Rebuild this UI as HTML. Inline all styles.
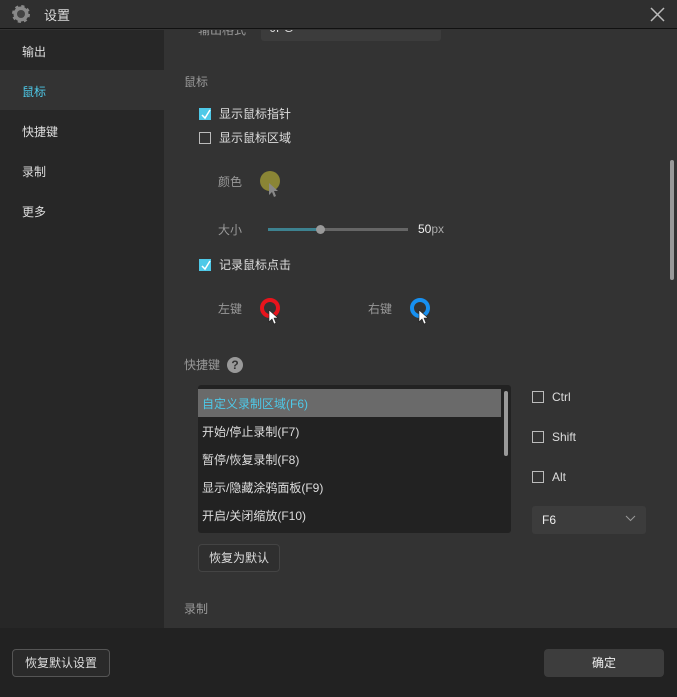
<!DOCTYPE html>
<html><head><meta charset="utf-8"><style>
*{margin:0;padding:0;box-sizing:border-box}
body{width:677px;height:697px;background:#333;font-family:"Liberation Sans","Noto Sans CJK SC",sans-serif;font-size:12px;color:#ddd;position:relative;overflow:hidden}
.a{position:absolute}
.cb{position:absolute;width:12px;height:12px;border:1px solid #bbb}
.cbon{position:absolute;width:12px;height:12px;background:#4ec9e8}
.lbl{color:#999}
</style></head><body>
<div class="a" style="left:0;top:0;width:677px;height:29px;background:#2f2f2f;border-bottom:1px solid #111"></div>
<svg class="a" style="left:11px;top:4px" width="20" height="20" viewBox="0 0 20 20"><circle cx="10" cy="10" r="7.5" fill="#888" stroke="#888" stroke-width="3" stroke-dasharray="3 2.9"/><circle cx="10" cy="10" r="4" fill="#444"/></svg>
<div class="a" style="left:44px;top:5px;font-size:13px;color:#ddd">设置</div>
<svg class="a" style="left:650px;top:7px" width="15" height="15"><path d="M1 1L14 14M14 1L1 14" stroke="#bbb" stroke-width="1.5"/></svg>
<div class="a" style="left:0;top:30px;width:164px;height:598px;background:#272727"></div>
<div class="a" style="left:0;top:70px;width:164px;height:40px;background:#333"></div>
<div class="a" style="left:22px;top:43px">输出</div>
<div class="a" style="left:22px;top:83px;color:#4ec9e8">鼠标</div>
<div class="a" style="left:22px;top:123px">快捷键</div>
<div class="a" style="left:22px;top:163px">录制</div>
<div class="a" style="left:22px;top:203px">更多</div>
<div class="a" style="left:164px;top:30px;width:500px;height:12px;overflow:hidden">
<div class="a lbl" style="left:34px;top:-9px">输出格式</div>
<div class="a" style="left:97px;top:0;width:180px;height:11px;background:#3c3c3c;border-radius:0 0 3px 3px"></div>
<div class="a" style="left:106px;top:-9px">JPG</div>
</div>
<div class="a lbl" style="left:184px;top:73px">鼠标</div>
<div class="cbon" style="left:199px;top:108px"></div><svg class="a" style="left:200px;top:109px" width="11" height="11"><path d="M2 6L5 9L10 1" stroke="#fff" stroke-width="1.5" fill="none"/></svg>
<div class="a" style="left:219px;top:105px">显示鼠标指针</div>
<div class="cb" style="left:199px;top:132px"></div>
<div class="a" style="left:219px;top:129px">显示鼠标区域</div>
<div class="a lbl" style="left:218px;top:173px">颜色</div>
<div class="a" style="left:260px;top:171px;width:20px;height:20px;border-radius:50%;background:#8a8535"></div>
<svg class="a" style="left:268px;top:182px" width="12" height="16"><path d="M1 1L1 13L4 10L6 15L8 14L6 9L10 9Z" fill="#888"/></svg>
<div class="a lbl" style="left:218px;top:221px">大小</div>
<div class="a" style="left:268px;top:228px;width:53px;height:3px;background:#3d8290"></div>
<div class="a" style="left:321px;top:228px;width:87px;height:3px;background:#666"></div>
<div class="a" style="left:316px;top:225px;width:9px;height:9px;border-radius:50%;background:#999"></div>
<div class="a" style="left:418px;top:222px;color:#eee">50<span style="color:#aaa">px</span></div>
<div class="cbon" style="left:199px;top:259px"></div><svg class="a" style="left:200px;top:260px" width="11" height="11"><path d="M2 6L5 9L10 1" stroke="#fff" stroke-width="1.5" fill="none"/></svg>
<div class="a" style="left:219px;top:256px">记录鼠标点击</div>
<div class="a lbl" style="left:218px;top:300px">左键</div>
<div class="a" style="left:260px;top:298px;width:20px;height:20px;border-radius:50%;border:4px solid #e8141c"></div>
<svg class="a" style="left:268px;top:309px" width="12" height="17"><path d="M1 1L1 13L4 10L6 15L8 14L6 9L10 9Z" fill="#fff" stroke="#222" stroke-width=".6"/></svg>
<div class="a lbl" style="left:368px;top:300px">右键</div>
<div class="a" style="left:410px;top:298px;width:20px;height:20px;border-radius:50%;border:4px solid #1790f0"></div>
<svg class="a" style="left:418px;top:309px" width="12" height="17"><path d="M1 1L1 13L4 10L6 15L8 14L6 9L10 9Z" fill="#fff" stroke="#222" stroke-width=".6"/></svg>
<div class="a lbl" style="left:184px;top:356px">快捷键</div>
<div class="a" style="left:227px;top:357px;width:16px;height:16px;border-radius:50%;background:#999;color:#333;font-weight:bold;font-size:12px;text-align:center;line-height:16px">?</div>
<div class="a" style="left:198px;top:385px;width:313px;height:148px;background:#222;border-radius:3px"></div>
<div class="a" style="left:198px;top:389px;width:303px;height:28px;background:#6a6a6a"></div>
<div class="a" style="left:504px;top:391px;width:4px;height:65px;background:#999;border-radius:2px"></div>
<div class="a" style="left:202px;top:395px;color:#4ec9e8">自定义录制区域(F6)</div>
<div class="a" style="left:202px;top:423px">开始/停止录制(F7)</div>
<div class="a" style="left:202px;top:451px">暂停/恢复录制(F8)</div>
<div class="a" style="left:202px;top:479px">显示/隐藏涂鸦面板(F9)</div>
<div class="a" style="left:202px;top:507px">开启/关闭缩放(F10)</div>
<div class="a" style="left:198px;top:544px;width:82px;height:28px;border:1px solid #444;border-radius:4px;background:#2f2f2f;text-align:center;line-height:26px">恢复为默认</div>
<div class="cb" style="left:532px;top:391px"></div><div class="a" style="left:552px;top:390px">Ctrl</div>
<div class="cb" style="left:532px;top:431px"></div><div class="a" style="left:552px;top:430px">Shift</div>
<div class="cb" style="left:532px;top:471px"></div><div class="a" style="left:552px;top:470px">Alt</div>
<div class="a" style="left:532px;top:506px;width:114px;height:28px;background:#3c3c3c;border-radius:3px"></div>
<div class="a" style="left:542px;top:513px;color:#eee">F6</div>
<svg class="a" style="left:625px;top:515px" width="11" height="8"><path d="M1 1L5.5 5.5L10 1" stroke="#999" fill="none"/></svg>
<div class="a lbl" style="left:184px;top:600px">录制</div>
<div class="a" style="left:670px;top:160px;width:4px;height:120px;background:#999;border-radius:2px"></div>
<div class="a" style="left:0;top:628px;width:677px;height:69px;background:#222"></div>
<div class="a" style="left:12px;top:649px;width:98px;height:28px;border:1px solid #555;border-radius:4px;background:#2a2a2a;text-align:center;line-height:26px">恢复默认设置</div>
<div class="a" style="left:544px;top:649px;width:120px;height:28px;border-radius:4px;background:#3d3d3d;text-align:center;line-height:28px;color:#eee">确定</div>
</body></html>
